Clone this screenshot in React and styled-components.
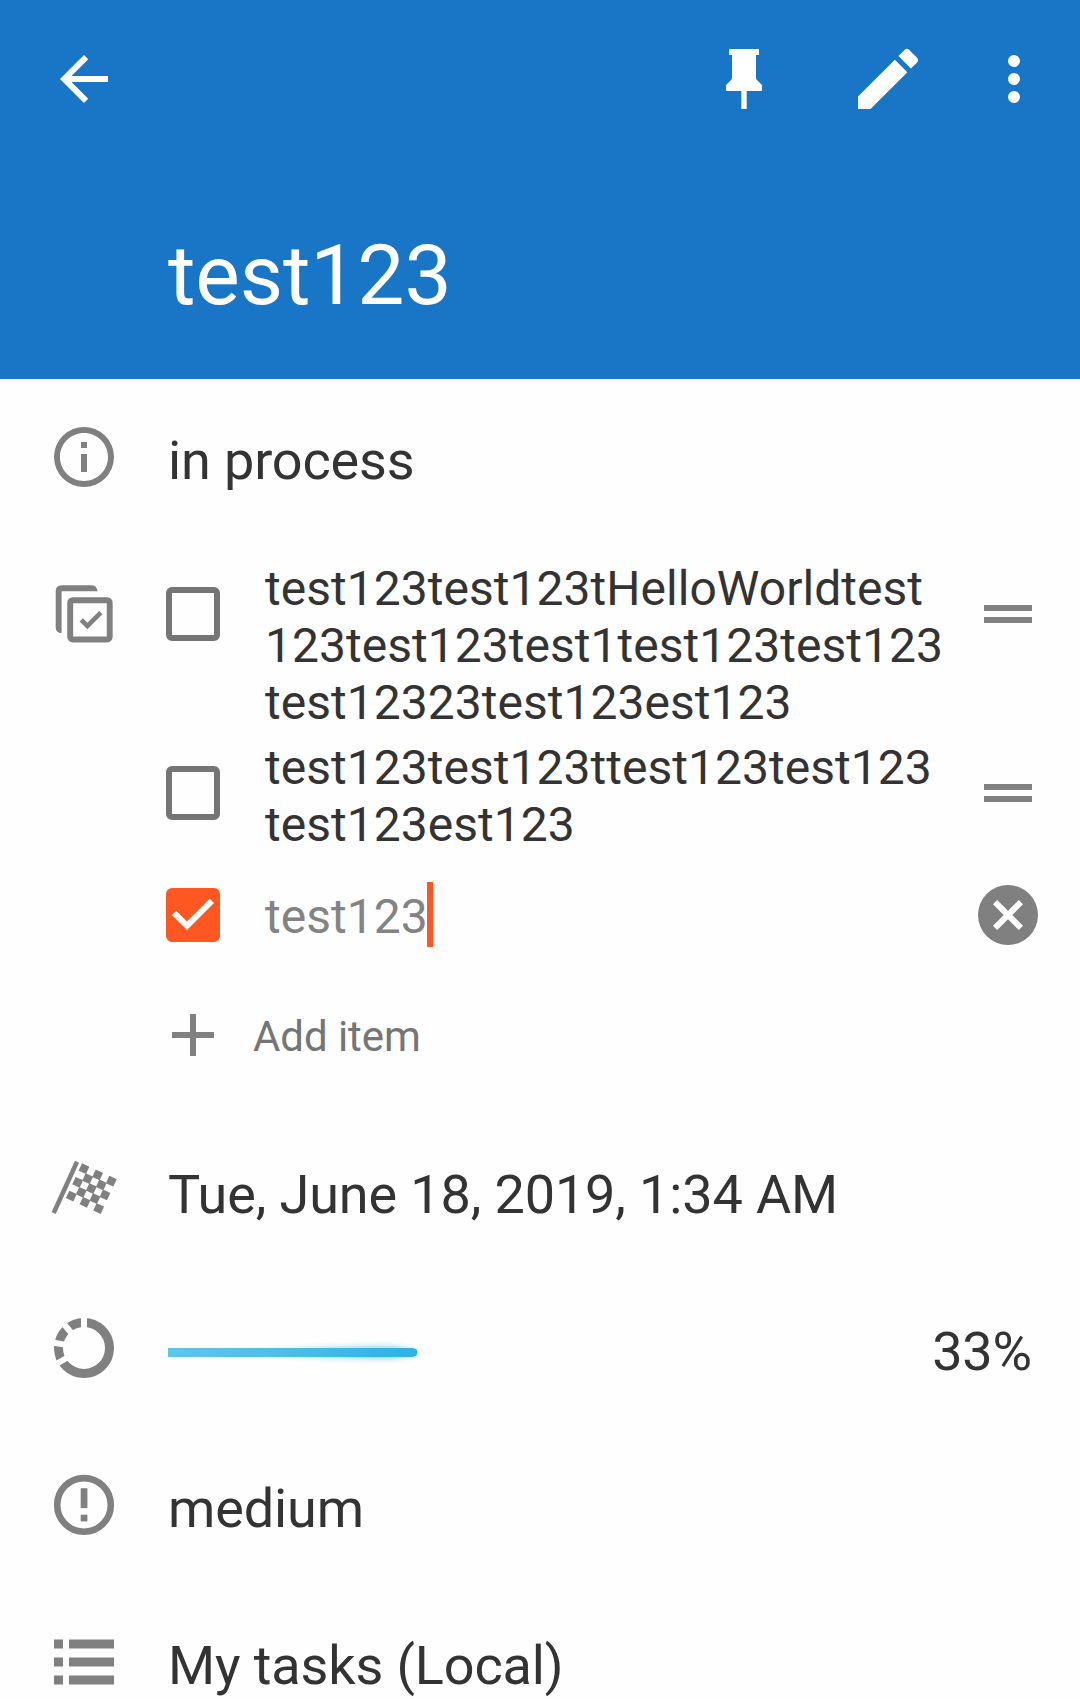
import React from "react";
import styled, { createGlobalStyle } from "styled-components";

const GlobalStyle = createGlobalStyle`
  * { box-sizing: border-box; }
  html, body { margin: 0; padding: 0; background: #fefefe; }
  body { font-family: Roboto, "Liberation Sans", sans-serif; -webkit-font-smoothing: antialiased; }
`;

const Screen = styled.main`
  width: 1080px;
  height: 1699px;
  overflow: hidden;
  background: #fefefe;
  color: #333;
`;

const Header = styled.header`
  height: 379px;
  background: #1976c7;
  color: #fff;
`;

const Toolbar = styled.div`
  height: 158px;
  padding: 0 30px 0 48px;
  display: flex;
  align-items: center;
`;

const Actions = styled.div`
  margin-left: auto;
  display: flex;
  align-items: center;
  gap: 68px;
`;

const IconButton = styled.button`
  border: 0;
  padding: 0;
  background: none;
  color: inherit;
  display: flex;
  margin-left: ${(p) => p.$shift || 0}px;
`;

const Title = styled.h1`
  margin: 69px 0 0 168px;
  font-size: 84px;
  line-height: 98px;
  font-weight: 400;
  letter-spacing: -0.15px;
`;

const Icon = styled.svg`
  display: block;
  flex: none;
  width: ${(p) => p.$size || 72}px;
  height: ${(p) => p.$size || 72}px;
  fill: currentColor;
`;

const Row = styled.section`
  height: 157px;
  padding: 0 48px;
  display: flex;
  align-items: flex-start;
`;

const RowIcon = styled.div`
  width: 120px;
  flex: none;
  padding-top: 42px;
  color: #808080;
`;

const Value = styled.div`
  padding-top: 50px;
  font-size: 54px;
  line-height: 63px;
  letter-spacing: -0.13px;
  white-space: nowrap;
`;

const Checklist = styled.section`
  height: 577px;
  padding: 20px 36px 0 48px;
  display: flex;
`;

const ChecklistIcon = styled.div`
  width: 118px;
  flex: none;
  padding-top: 22px;
  color: #808080;
`;

const Items = styled.div`
  flex: 1;
  display: flex;
  flex-direction: column;
`;

const Item = styled.div`
  display: flex;
  align-items: flex-start;
  padding: 4px 0;
`;

const Checkbox = styled.span`
  width: 54px;
  height: 54px;
  flex: none;
  margin-top: 27px;
  border-radius: 6px;
  border: 6px solid ${(p) => (p.$checked ? "#ff5722" : "#757575")};
  background: ${(p) => (p.$checked ? "#ff5722" : "transparent")};
  color: #fff;
  display: flex;
  align-items: center;
  justify-content: center;
`;

const ItemText = styled.div`
  position: relative;
  width: 682px;
  min-height: 111px;
  margin-left: 45px;
  display: flex;
  align-items: center;
  font-size: 48px;
  line-height: 57px;
  letter-spacing: 0.03px;
  word-break: break-all;
  color: ${(p) => (p.$done ? "#838383" : "#333")};
`;

const Caret = styled.span`
  position: absolute;
  left: 162px;
  top: 21px;
  width: 6px;
  height: 65px;
  background: #ff5722;
`;

const ItemAction = styled.div`
  margin: 18px 0 0 auto;
  color: #808080;
`;

const AddItem = styled.div`
  height: 118px;
  padding-left: 6px;
  display: flex;
  align-items: center;
  color: #808080;
`;

const AddLabel = styled.span`
  margin: 3px 0 0 39px;
  font-size: 42px;
  line-height: 49px;
  letter-spacing: -0.06px;
  color: #757575;
`;

const Progress = styled.div`
  flex: 1;
  padding-top: 78px;
`;

const ProgressFill = styled.svg`
  display: block;
  margin: -9px 0;
  width: 252px;
  height: 27px;
`;

const Percent = styled(Value)`
  margin-left: auto;
`;

const InfoIcon = () => (
  <Icon viewBox="0 0 24 24">
    <path d="M11 9h2V7h-2m1 13c-4.41 0-8-3.59-8-8s3.59-8 8-8 8 3.59 8 8-3.59 8-8 8m0-18A10 10 0 1 0 12 22 10 10 0 0 0 12 2m-1 15h2v-6h-2v6z" />
  </Icon>
);

const ChecklistGlyph = () => (
  <Icon viewBox="0 0 72 72">
    <path d="M7.7 49.5V13.3q0-6 6-6H44Q48.500 7.500 49.700 13.200H13.600V55.300Q7.700 54.500 7.700 49.500z" />
    <g fill="none" stroke="currentColor">
      <rect x="22.2" y="22.200" width="39.500" height="39.300" rx="2.500" strokeWidth="5.900" />
      <path d="M33.200 41.800l6.200 6.200L52.800 34.600" strokeWidth="4.600" />
    </g>
  </Icon>
);

const CELLS = [0, 1, 2, 3, 4].flatMap((r) =>
  [0, 1, 2, 3, 4].filter((c) => (r + c) % 2 === 0).map((c) => [c, r])
);

const FlagIcon = () => (
  <Icon viewBox="0 0 72 72">
    <path d="M29 6.7L5.7 58" stroke="currentColor" strokeWidth="4.5" />
    <g transform="matrix(6.83 3.13 -3.17 6.83 36 13.7)">
      {CELLS.map(([c, r]) => (
        <rect key={`${c}-${r}`} x={c - 0.54} y={r - 0.54} width="1.08" height="1.08" />
      ))}
    </g>
  </Icon>
);

const ProgressIcon = () => (
  <Icon viewBox="0 0 72 72">
    <circle cx="36" cy="36" r="25.5" fill="none" stroke="currentColor" strokeWidth="9" />
    {[0, -40, -80, -120].map((a) => (
      <rect key={a} x="33" y="4" width="6" height="14" fill="#fefefe" transform={`rotate(${a} 36 36)`} />
    ))}
  </Icon>
);

const PriorityIcon = () => (
  <Icon viewBox="0 0 72 72">
    <circle cx="36" cy="35.9" r="26.8" fill="none" stroke="currentColor" strokeWidth="6.6" />
    <rect x="32.7" y="19.2" width="6.700" height="19.900" />
    <rect x="32.7" y="45.700" width="6.700" height="6.700" />
  </Icon>
);

const ListIcon = () => (
  <Icon viewBox="0 0 24 24">
    <path d="M2 4.5h3v3H2zM7 4.5h15v3H7zM2 10.5h3v3H2zM7 10.5h15v3H7zM2 16.5h3v3H2zM7 16.5h15v3H7z" />
  </Icon>
);

const DragIcon = () => (
  <Icon viewBox="0 0 24 24">
    <path d="M4 9h16v2H4zM4 13h16v2H4z" />
  </Icon>
);

const RemoveIcon = () => (
  <Icon viewBox="0 0 24 24">
    <path d="M12 2a10 10 0 1 0 0 20 10 10 0 0 0 0-20m5 13.59L15.59 17 12 13.41 8.41 17 7 15.59 10.59 12 7 8.41 8.41 7 12 10.59 15.59 7 17 8.41 13.41 12 17 15.59z" />
  </Icon>
);

const CheckMark = () => (
  <Icon viewBox="0 0 24 24">
    <path d="M10 17l-5-5 1.41-1.42L10 14.17l7.59-7.59L19 8l-9 9z" />
  </Icon>
);

const todos = [
  { text: "test123test123tHelloWorldtest123test123test1test123test123test12323test123est123" },
  { text: "test123test123ttest123test123test123est123" },
  { text: "test123", done: true },
];

export default function App() {
  return (
    <Screen>
      <GlobalStyle />
      <Header>
        <Toolbar>
          <IconButton aria-label="Back">
            <Icon viewBox="0 0 24 24">
              <path d="M20 11H7.83l5.59-5.59L12 4l-8 8 8 8 1.41-1.41L7.83 13H20v-2z" />
            </Icon>
          </IconButton>
          <Actions>
            <IconButton aria-label="Pin">
              <Icon viewBox="0 0 24 24">
                <path d="M16 12V4h1V2H7v2h1v8l-2 2v2h5.1v6h1.8v-6H18v-2l-2-2z" />
              </Icon>
            </IconButton>
            <IconButton aria-label="Edit">
              <Icon viewBox="0 0 24 24" $size={80}>
                <path d="M3 17.25V21h3.75L17.81 9.94l-3.75-3.75L3 17.25zM20.71 7.04a1 1 0 0 0 0-1.41l-2.34-2.34a1 1 0 0 0-1.41 0l-1.83 1.83 3.75 3.75 1.83-1.83z" />
              </Icon>
            </IconButton>
            <IconButton aria-label="More" $shift={-18}>
              <Icon viewBox="0 0 24 24">
                <path d="M12 8a2 2 0 1 0 0-4 2 2 0 0 0 0 4zm0 2a2 2 0 1 0 0 4 2 2 0 0 0 0-4zm0 6a2 2 0 1 0 0 4 2 2 0 0 0 0-4z" />
              </Icon>
            </IconButton>
          </Actions>
        </Toolbar>
        <Title>test123</Title>
      </Header>

      <Row>
        <RowIcon><InfoIcon /></RowIcon>
        <Value>in process</Value>
      </Row>

      <Checklist>
        <ChecklistIcon><ChecklistGlyph /></ChecklistIcon>
        <Items>
          {todos.map((t) => (
            <Item key={t.text}>
              <Checkbox $checked={t.done}>{t.done && <CheckMark />}</Checkbox>
              <ItemText $done={t.done}>
                <span>{t.text}</span>
                {t.done && <Caret />}
              </ItemText>
              <ItemAction>{t.done ? <RemoveIcon /> : <DragIcon />}</ItemAction>
            </Item>
          ))}
          <AddItem>
            <Icon viewBox="0 0 42 42" $size={42}>
              <path d="M18 0h6v18h18v6H24v18h-6V24H0v-6h18z" />
            </Icon>
            <AddLabel>Add item</AddLabel>
          </AddItem>
        </Items>
      </Checklist>

      <Row>
        <RowIcon><FlagIcon /></RowIcon>
        <Value>Tue, June 18, 2019, 1:34 AM</Value>
      </Row>

      <Row>
        <RowIcon><ProgressIcon /></RowIcon>
        <Progress>
          <ProgressFill viewBox="0 0 252 27">
            <defs>
              <linearGradient id="bar">
                <stop offset="0" stopColor="#5ec4ec" />
                <stop offset="0.45" stopColor="#4fbee8" />
                <stop offset="0.85" stopColor="#35b4e6" />
                <stop offset="1" stopColor="#30b2e5" />
              </linearGradient>
              <radialGradient id="glow">
                <stop offset="0" stopColor="#33b5e5" stopOpacity="0.8" />
                <stop offset="0.4" stopColor="#33b5e5" stopOpacity="0.42" />
                <stop offset="0.7" stopColor="#33b5e5" stopOpacity="0.12" />
                <stop offset="1" stopColor="#33b5e5" stopOpacity="0" />
              </radialGradient>
              <clipPath id="tail"><rect width="219" height="27" /></clipPath>
              <clipPath id="head"><rect x="219" width="30" height="27" /></clipPath>
            </defs>
            <ellipse cx="219" cy="13.5" rx="150" ry="11.5" fill="url(#glow)" clipPath="url(#tail)" />
            <ellipse cx="219" cy="13.5" rx="38" ry="11.5" fill="url(#glow)" clipPath="url(#head)" />
            <path d="M0 9H244q4 0.500 5 2v5q-1 1.500-5 2H0z" fill="url(#bar)" />
          </ProgressFill>
        </Progress>
        <Percent>33%</Percent>
      </Row>

      <Row>
        <RowIcon><PriorityIcon /></RowIcon>
        <Value>medium</Value>
      </Row>

      <Row>
        <RowIcon><ListIcon /></RowIcon>
        <Value>My tasks (Local)</Value>
      </Row>
    </Screen>
  );
}
